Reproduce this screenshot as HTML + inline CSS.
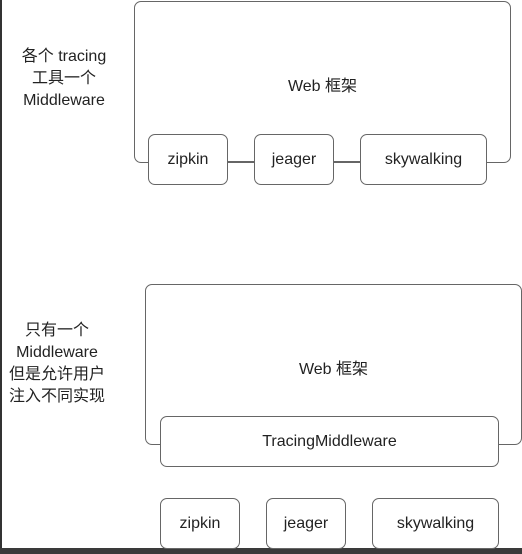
<html><head><style>
body{margin:0;width:522px;height:554px;background:#fff;position:relative;overflow:hidden;font-family:"Liberation Sans","Noto Sans CJK SC",sans-serif;color:#222}
.b{position:absolute;border:1px solid #666;border-radius:7px;background:#fff;box-sizing:border-box;display:flex;align-items:center;justify-content:center;font-size:16px}
.l{position:absolute;height:1px;background:#666}
.t{position:absolute;text-align:center;font-size:16px;line-height:22px}
</style></head><body>
<div style="position:absolute;left:0;top:0;width:2px;height:554px;background:#333"></div>
<div style="position:absolute;left:0;top:548px;width:522px;height:6px;background:#3a3a3a"></div>
<div class="t" style="left:4px;top:46px;width:120px">各个 tracing<br>工具一个<br>Middleware</div>
<div class="b" style="left:134px;top:1px;width:377px;height:162px;align-items:flex-start;padding-top:70px">Web 框架</div>
<div class="l" style="left:228px;top:161px;width:26px"></div>
<div class="l" style="left:334px;top:161px;width:26px"></div>
<div class="b" style="left:148px;top:134px;width:80px;height:51px">zipkin</div>
<div class="b" style="left:254px;top:134px;width:80px;height:51px">jeager</div>
<div class="b" style="left:360px;top:134px;width:127px;height:51px">skywalking</div>
<div class="t" style="left:0;top:320px;width:114px">只有一个<br>Middleware<br>但是允许用户<br>注入不同实现</div>
<div class="b" style="left:145px;top:284px;width:377px;height:161px;align-items:flex-start;padding-top:70px">Web 框架</div>
<div class="b" style="left:160px;top:416px;width:339px;height:51px">TracingMiddleware</div>
<div class="b" style="left:160px;top:498px;width:80px;height:51px">zipkin</div>
<div class="b" style="left:266px;top:498px;width:80px;height:51px">jeager</div>
<div class="b" style="left:372px;top:498px;width:127px;height:51px">skywalking</div>
</body></html>
